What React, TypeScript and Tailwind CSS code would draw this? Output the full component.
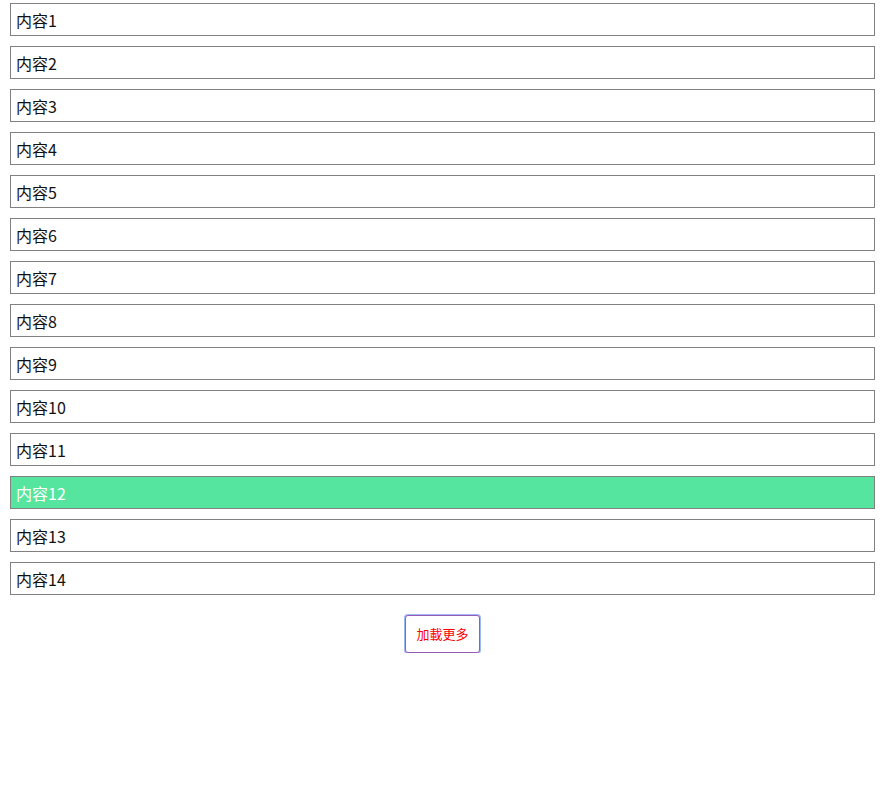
export default function App() {
  const items = Array.from({ length: 14 }, (_, i) => i + 1);
  return (
    <div className="bg-white pt-[3px] pl-[10px] pr-[9px]" style={{ fontFamily: '"Noto Sans CJK SC", "Noto Sans", sans-serif' }}>
      <div className="flex flex-col gap-[10px]">
        {items.map((n) => (
          <div
            key={n}
            className={`h-[33px] border border-[#808080] pl-[5px] flex items-center text-[16px] ${n === 12 ? "bg-[#55e59e] text-white" : "bg-white text-[#111]"}`}
          >
            内容{n}
          </div>
        ))}
      </div>
      <div className="flex justify-center pt-[20px]">
        <button className="w-[75px] h-[38px] border border-[#9a5ab8] rounded-[3px] shadow-[0_0_0_1px_#9db8f5] text-[13px] text-[#ff0000] bg-white">
          加載更多
        </button>
      </div>
    </div>
  );
}
